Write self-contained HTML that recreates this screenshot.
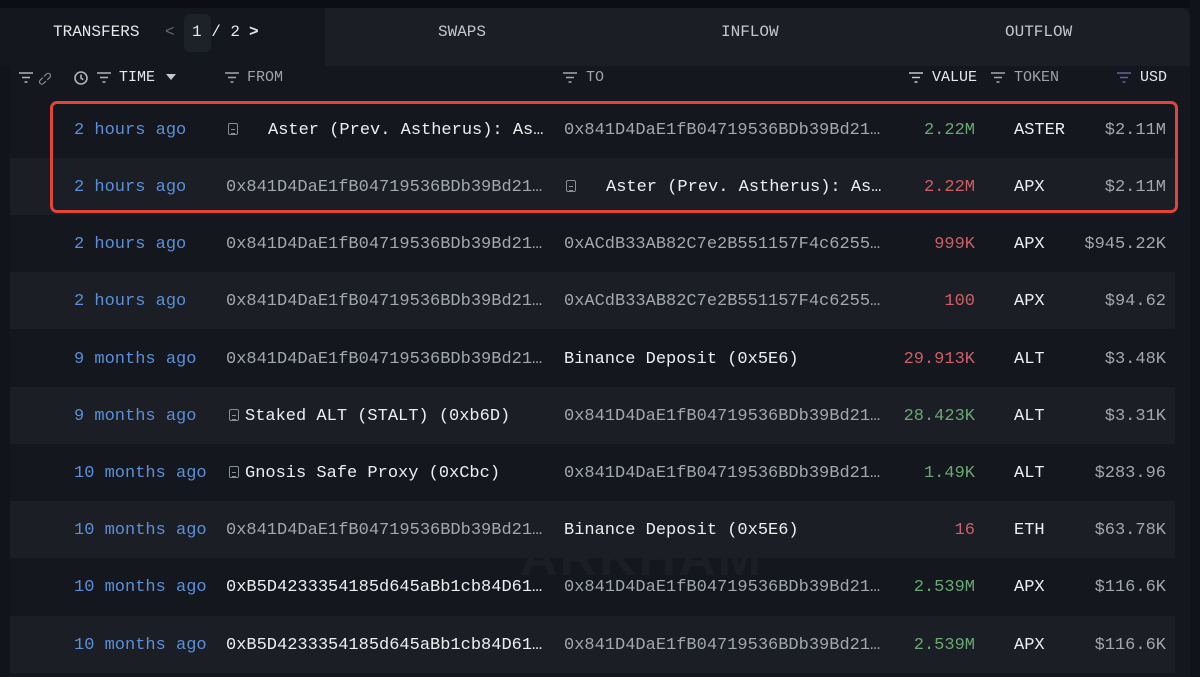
<!DOCTYPE html>
<html><head><meta charset="utf-8"><style>
*{margin:0;padding:0;box-sizing:border-box}
body{width:1200px;height:677px;overflow:hidden;background:#14171d;font-family:"Liberation Mono",monospace;position:relative;color:#e6e8eb}
.abs{position:absolute;white-space:nowrap}
.top{left:0;top:0;width:1200px;height:8px;background:#0c0e13}
.rstrip{left:1190px;top:0;width:10px;height:677px;background:#101318}
.lstrip{left:0;top:66px;width:10px;height:611px;background:#111419}
.tabs{left:325px;top:8px;width:865px;height:58px;background:#1b1e24;border-top-right-radius:10px}
.tab{font-size:16px;color:#c4c7cc;top:23px}
.hdr{font-size:15px;color:#9ea2a9;top:69px}
.row{left:10px;width:1165px;height:57px}
.even{background:#1b1e24}
.c{font-size:17px;top:0;line-height:57px}
.t{color:#5b8fd9}
.g{color:#a3a7ae}
.w{color:#eceef0}
.gr{color:#6aa874}
.rd{color:#cf5f66}
.r{text-align:right}
.doc{display:inline-block;width:10px;height:12px;border:1.3px solid #8a8e95;border-radius:2px;vertical-align:-1px;position:relative}
.doc:after{content:"";position:absolute;left:1.5px;top:5px;width:4px;height:3px;border-top:1px solid #8a8e95;border-bottom:1px solid #8a8e95}
.box{left:50px;top:101px;width:1128px;height:112px;border:3px solid #e0443a;border-radius:7px}
</style></head><body>
<div class="abs top"></div>
<div class="abs tabs"></div>
<div class="abs lstrip"></div>
<div class="abs rstrip"></div>
<div class="abs" style="left:184px;top:14px;width:27px;height:38px;background:#1d2128;border-radius:6px"></div>
<div class="abs tab" style="left:53px;color:#e6e8eb">TRANSFERS</div>
<div class="abs tab" style="left:165px;color:#666a72">&lt;</div>
<div class="abs tab" style="left:192px;color:#e6e8eb">1 / 2</div>
<div class="abs tab" style="left:249px;color:#e6e8eb;font-weight:bold">&gt;</div>
<div class="abs tab" style="left:438px">SWAPS</div>
<div class="abs tab" style="left:721px">INFLOW</div>
<div class="abs tab" style="left:1005px">OUTFLOW</div>

<svg class="abs" style="left:18px;top:70px" width="100" height="16" viewBox="0 0 100 16" fill="none" stroke="#b0b4ba" stroke-width="1.6">
<path d="M1 3h14M4 7.5h8M6.5 12h3"/>
<path d="M28 11l-2.5 2.5a2.3 2.3 0 01-3.3-3.3l2.5-2.5M26 6.5l2.5-2.5a2.3 2.3 0 013.3 3.3l-2.5 2.5" stroke="#888c93" stroke-width="1.2"/>
<circle cx="63" cy="8" r="6"/><path d="M63 4.5v3.7l2.3 1.5"/>
<path d="M79 3h14M82 7.5h8M84.5 12h3"/>
</svg>
<div class="abs hdr" style="left:119px;color:#e6e8eb">TIME</div>
<svg class="abs" style="left:166px;top:74px" width="10" height="6"><path d="M0 0h10L5 6z" fill="#c4c7cc"/></svg>
<svg class="abs" style="left:224px;top:70px" width="16" height="16" fill="none" stroke="#a3a7ae" stroke-width="1.6"><path d="M1 3h14M4 7.5h8M6.5 12h3"/></svg>
<div class="abs hdr" style="left:247px">FROM</div>
<svg class="abs" style="left:562px;top:70px" width="16" height="16" fill="none" stroke="#a3a7ae" stroke-width="1.6"><path d="M1 3h14M4 7.5h8M6.5 12h3"/></svg>
<div class="abs hdr" style="left:586px">TO</div>
<svg class="abs" style="left:908px;top:70px" width="16" height="16" fill="none" stroke="#c4c7cc" stroke-width="1.6"><path d="M1 3h14M4 7.5h8M6.5 12h3"/></svg>
<div class="abs hdr" style="left:932px;color:#e6e8eb">VALUE</div>
<svg class="abs" style="left:990px;top:70px" width="16" height="16" fill="none" stroke="#a3a7ae" stroke-width="1.6"><path d="M1 3h14M4 7.5h8M6.5 12h3"/></svg>
<div class="abs hdr" style="left:1014px">TOKEN</div>
<svg class="abs" style="left:1116px;top:70px" width="16" height="16" fill="none" stroke="#6b5fa8" stroke-width="1.6"><path d="M1 3h14M4 7.5h8M6.5 12h3"/></svg>
<div class="abs hdr" style="left:1140px;color:#e6e8eb">USD</div>

<div class="abs row" style="top:101px"></div>
<div class="abs row even" style="top:158px"></div>
<div class="abs row" style="top:215px"></div>
<div class="abs row even" style="top:272px"></div>
<div class="abs row" style="top:330px"></div>
<div class="abs row even" style="top:387px"></div>
<div class="abs row" style="top:444px"></div>
<div class="abs row even" style="top:501px"></div>
<div class="abs row" style="top:558px"></div>
<div class="abs row even" style="top:616px"></div>

<div class="abs" style="left:520px;top:528px;font-family:'Liberation Sans',sans-serif;font-weight:bold;font-size:52px;color:#1b1e24;letter-spacing:2px">ARKHAM</div>

<div class="abs" style="top:102px;left:0;width:1200px">
<div class="abs c t" style="left:74px">2 hours ago</div>
<div class="abs c" style="left:228px"><span class="doc"></span></div>
<div class="abs c w" style="left:268px">Aster (Prev. Astherus): As…</div>
<div class="abs c g" style="left:564px">0x841D4DaE1fB04719536BDb39Bd21…</div>
<div class="abs c gr r" style="left:875px;width:100px">2.22M</div>
<div class="abs c w" style="left:1014px">ASTER</div>
<div class="abs c g r" style="left:1040px;width:126px">$2.11M</div>
</div>
<div class="abs" style="top:159px;left:0;width:1200px">
<div class="abs c t" style="left:74px">2 hours ago</div>
<div class="abs c g" style="left:226px">0x841D4DaE1fB04719536BDb39Bd21…</div>
<div class="abs c" style="left:566px"><span class="doc"></span></div>
<div class="abs c w" style="left:606px">Aster (Prev. Astherus): As…</div>
<div class="abs c rd r" style="left:875px;width:100px">2.22M</div>
<div class="abs c w" style="left:1014px">APX</div>
<div class="abs c g r" style="left:1040px;width:126px">$2.11M</div>
</div>
<div class="abs" style="top:216px;left:0;width:1200px">
<div class="abs c t" style="left:74px">2 hours ago</div>
<div class="abs c g" style="left:226px">0x841D4DaE1fB04719536BDb39Bd21…</div>
<div class="abs c g" style="left:564px">0xACdB33AB82C7e2B551157F4c6255…</div>
<div class="abs c rd r" style="left:875px;width:100px">999K</div>
<div class="abs c w" style="left:1014px">APX</div>
<div class="abs c g r" style="left:1040px;width:126px">$945.22K</div>
</div>
<div class="abs" style="top:273px;left:0;width:1200px">
<div class="abs c t" style="left:74px">2 hours ago</div>
<div class="abs c g" style="left:226px">0x841D4DaE1fB04719536BDb39Bd21…</div>
<div class="abs c g" style="left:564px">0xACdB33AB82C7e2B551157F4c6255…</div>
<div class="abs c rd r" style="left:875px;width:100px">100</div>
<div class="abs c w" style="left:1014px">APX</div>
<div class="abs c g r" style="left:1040px;width:126px">$94.62</div>
</div>
<div class="abs" style="top:331px;left:0;width:1200px">
<div class="abs c t" style="left:74px">9 months ago</div>
<div class="abs c g" style="left:226px">0x841D4DaE1fB04719536BDb39Bd21…</div>
<div class="abs c w" style="left:564px">Binance Deposit (0x5E6)</div>
<div class="abs c rd r" style="left:875px;width:100px">29.913K</div>
<div class="abs c w" style="left:1014px">ALT</div>
<div class="abs c g r" style="left:1040px;width:126px">$3.48K</div>
</div>
<div class="abs" style="top:388px;left:0;width:1200px">
<div class="abs c t" style="left:74px">9 months ago</div>
<div class="abs c" style="left:229px"><span class="doc"></span></div>
<div class="abs c w" style="left:245px">Staked ALT (STALT) (0xb6D)</div>
<div class="abs c g" style="left:564px">0x841D4DaE1fB04719536BDb39Bd21…</div>
<div class="abs c gr r" style="left:875px;width:100px">28.423K</div>
<div class="abs c w" style="left:1014px">ALT</div>
<div class="abs c g r" style="left:1040px;width:126px">$3.31K</div>
</div>
<div class="abs" style="top:445px;left:0;width:1200px">
<div class="abs c t" style="left:74px">10 months ago</div>
<div class="abs c" style="left:229px"><span class="doc"></span></div>
<div class="abs c w" style="left:245px">Gnosis Safe Proxy (0xCbc)</div>
<div class="abs c g" style="left:564px">0x841D4DaE1fB04719536BDb39Bd21…</div>
<div class="abs c gr r" style="left:875px;width:100px">1.49K</div>
<div class="abs c w" style="left:1014px">ALT</div>
<div class="abs c g r" style="left:1040px;width:126px">$283.96</div>
</div>
<div class="abs" style="top:502px;left:0;width:1200px">
<div class="abs c t" style="left:74px">10 months ago</div>
<div class="abs c g" style="left:226px">0x841D4DaE1fB04719536BDb39Bd21…</div>
<div class="abs c w" style="left:564px">Binance Deposit (0x5E6)</div>
<div class="abs c rd r" style="left:875px;width:100px">16</div>
<div class="abs c w" style="left:1014px">ETH</div>
<div class="abs c g r" style="left:1040px;width:126px">$63.78K</div>
</div>
<div class="abs" style="top:559px;left:0;width:1200px">
<div class="abs c t" style="left:74px">10 months ago</div>
<div class="abs c w" style="left:226px">0xB5D4233354185d645aBb1cb84D61…</div>
<div class="abs c g" style="left:564px">0x841D4DaE1fB04719536BDb39Bd21…</div>
<div class="abs c gr r" style="left:875px;width:100px">2.539M</div>
<div class="abs c w" style="left:1014px">APX</div>
<div class="abs c g r" style="left:1040px;width:126px">$116.6K</div>
</div>
<div class="abs" style="top:617px;left:0;width:1200px">
<div class="abs c t" style="left:74px">10 months ago</div>
<div class="abs c w" style="left:226px">0xB5D4233354185d645aBb1cb84D61…</div>
<div class="abs c g" style="left:564px">0x841D4DaE1fB04719536BDb39Bd21…</div>
<div class="abs c gr r" style="left:875px;width:100px">2.539M</div>
<div class="abs c w" style="left:1014px">APX</div>
<div class="abs c g r" style="left:1040px;width:126px">$116.6K</div>
</div>

<div class="abs box"></div>
</body></html>
